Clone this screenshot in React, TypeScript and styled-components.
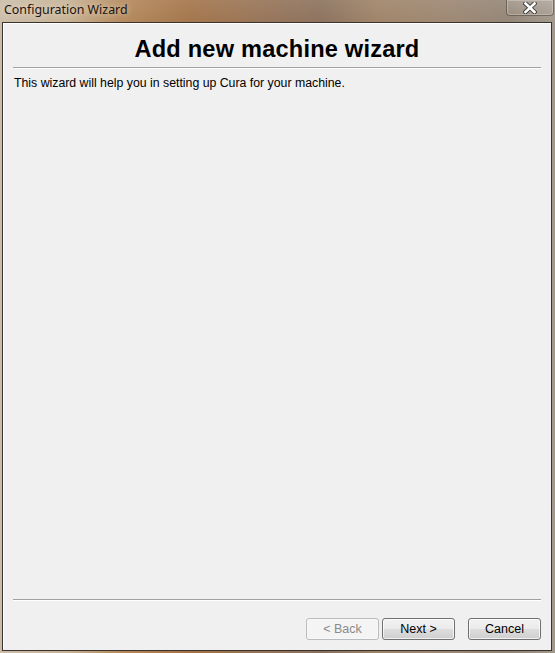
import React from "react";
import styled, { createGlobalStyle } from "styled-components";

const Global = createGlobalStyle`
  html, body { margin: 0; padding: 0; background: #9c8470; }
  #root { width: 555px; height: 653px; }
`;

const Window = styled.div`
  width: 555px;
  height: 653px;
  box-sizing: border-box;
  display: flex;
  flex-direction: column;
  padding: 0 3px 2px 2px;
  background:
    linear-gradient(180deg, rgba(255,255,255,0.1) 0%, rgba(0,0,0,0) 30px),
    linear-gradient(90deg, #cbbca9 0%, #c6b193 12%, #b3875a 22%, #a27348 34%, #977254 46%, #8a705c 58%, #9e8266 68%, #9c8570 80%, #918474 92%, #a2978c 100%);
`;

const TitleBar = styled.div`
  height: 22px;
  display: flex;
  align-items: flex-start;
  justify-content: space-between;
  flex-shrink: 0;
`;

const Title = styled.div`
  font-family: "Noto Sans", "Liberation Sans", sans-serif;
  font-size: 12.4px;
  line-height: 18px;
  padding: 1px 0 0 2px;
  color: #1a1410;
  text-shadow: 0 0 6px rgba(255, 240, 220, 0.8);
`;

const CloseButton = styled.div`
  width: 48px;
  height: 16px;
  margin-right: -2px;
  box-sizing: border-box;
  border: 1px solid rgba(70, 55, 45, 0.55);
  border-top: none;
  border-radius: 0 0 4px 4px;
  box-shadow: inset 0 0 0 1px rgba(255, 255, 255, 0.25);
  background: linear-gradient(180deg, rgba(255,255,255,0.15), rgba(255,255,255,0.05));
  display: flex;
  align-items: center;
  justify-content: center;
`;

const Client = styled.div`
  flex: 1;
  display: flex;
  flex-direction: column;
  background: #f0f0f0;
  border: 1px solid #3a322c;
  box-shadow: inset 1px 1px 0 #ffffff;
  padding: 0 10px 10px 10px;
  box-sizing: border-box;
  min-height: 0;
`;

const Heading = styled.h1`
  margin: 0;
  padding-top: 12px;
  height: 32px;
  text-align: center;
  font-family: "Liberation Sans", Arial, sans-serif;
  font-weight: bold;
  font-size: 23.6px;
  line-height: 28px;
  color: #000;
  letter-spacing: 0.2px;
`;

const Divider = styled.div`
  height: 1px;
  background: #a0a0a0;
  border-bottom: 1px solid #ffffff;
  flex-shrink: 0;
`;

const Intro = styled.p`
  margin: 7px 0 0 1px;
  font-family: "Liberation Sans", Tahoma, sans-serif;
  font-size: 12.3px;
  line-height: 14px;
  color: #000;
`;

const Spacer = styled.div`
  flex: 1;
`;

const ButtonRow = styled.div`
  display: flex;
  justify-content: flex-end;
  gap: 3px;
  padding: 17px 0 0 0;
`;

const Button = styled.button<{ $disabled?: boolean; $gapLeft?: number }>`
  width: 73px;
  height: 22px;
  box-sizing: border-box;
  margin-left: ${(p) => p.$gapLeft ?? 0}px;
  border-radius: 3px;
  font-family: "Liberation Sans", Tahoma, sans-serif;
  font-size: 12.5px;
  padding: 0;
  border: 1px solid ${(p) => (p.$disabled ? "#b8bcbf" : "#707070")};
  color: ${(p) => (p.$disabled ? "#8a8a8a" : "#000")};
  background: ${(p) =>
    p.$disabled
      ? "#f4f4f4"
      : "linear-gradient(180deg, #f2f2f2 0%, #ebebeb 48%, #dddddd 52%, #cfcfcf 100%)"};
  box-shadow: inset 0 0 0 1px ${(p) => (p.$disabled ? "#f8f8f8" : "rgba(255,255,255,0.7)")};
`;

export default function App() {
  return (
    <>
      <Global />
      <Window>
        <TitleBar>
          <Title>Configuration Wizard</Title>
          <CloseButton>
            <svg width="14" height="12" viewBox="0 0 14 12">
              <path d="M2.5 1.5 L11.5 10 M11.5 1.5 L2.5 10" stroke="#3a3a3a" strokeWidth="4.4" strokeLinecap="square" />
              <path d="M2.5 1.5 L11.5 10 M11.5 1.5 L2.5 10" stroke="#ffffff" strokeWidth="2.6" strokeLinecap="square" />
            </svg>
          </CloseButton>
        </TitleBar>
        <Client>
          <Heading>Add new machine wizard</Heading>
          <Divider />
          <Intro>This wizard will help you in setting up Cura for your machine.</Intro>
          <Spacer />
          <Divider />
          <ButtonRow>
            <Button $disabled disabled>&lt; Back</Button>
            <Button>Next &gt;</Button>
            <Button $gapLeft={10}>Cancel</Button>
          </ButtonRow>
        </Client>
      </Window>
    </>
  );
}
